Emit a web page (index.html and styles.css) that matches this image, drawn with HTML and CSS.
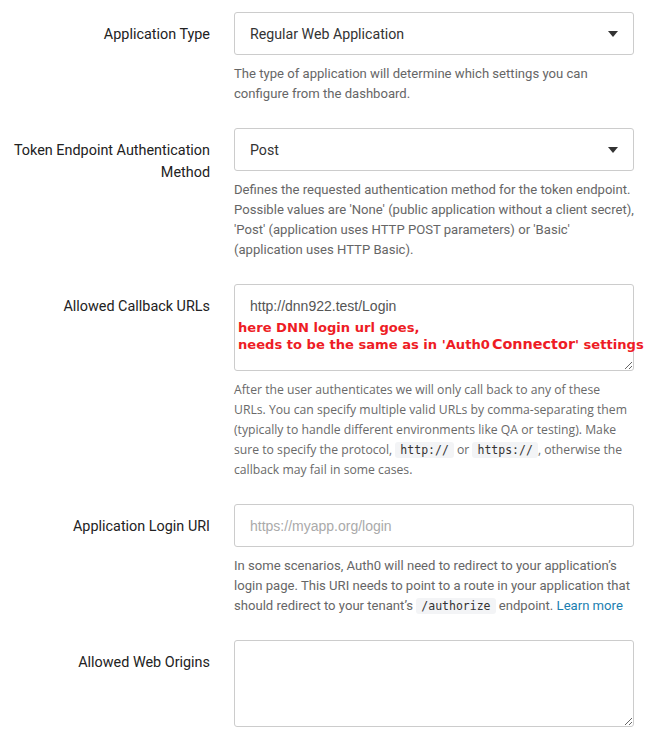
FILE: index.html
```html
<!DOCTYPE html>
<html>
<head>
<meta charset="utf-8">
<link rel="stylesheet" href="styles.css">
</head>
<body>
<div class="form">
  <div class="row">
    <div class="label">Application Type</div>
    <div class="control">
      <div class="select">
        <span>Regular Web Application</span>
        <svg class="caret" width="10" height="6" viewBox="0 0 10 6"><path d="M0 0h10L5 6z" fill="#333"/></svg>
      </div>
      <p class="help">The type of application will determine which settings you can configure from the dashboard.</p>
    </div>
  </div>

  <div class="row">
    <div class="label">Token Endpoint Authentication Method</div>
    <div class="control">
      <div class="select">
        <span>Post</span>
        <svg class="caret" width="10" height="6" viewBox="0 0 10 6"><path d="M0 0h10L5 6z" fill="#333"/></svg>
      </div>
      <p class="help">Defines the requested authentication method for the token endpoint. Possible values are 'None' (public application without a client secret), 'Post' (application uses HTTP POST parameters) or 'Basic' (application uses HTTP Basic).</p>
    </div>
  </div>

  <div class="row">
    <div class="label">Allowed Callback URLs</div>
    <div class="control">
      <div class="area-wrap">
        <textarea class="area">http://dnn922.test/Login</textarea>
        <div class="note">here DNN login url goes,<br>needs to be the same as in 'Auth0<span class="note-big">Connector</span>' settings</div>
      </div>
      <p class="help help-alt">After the user authenticates we will only call back to any of these URLs. You can specify multiple valid URLs by comma-separating them (typically to handle different environments like QA or testing). Make sure to specify the protocol, <code>http://</code> or <code>https://</code>, otherwise the callback may fail in some cases.</p>
    </div>
  </div>

  <div class="row">
    <div class="label">Application Login URI</div>
    <div class="control">
      <input class="input" type="text" placeholder="https://myapp.org/login">
      <p class="help">In some scenarios, Auth0 will need to redirect to your application’s login page. This URI needs to point to a route in your application that should redirect to your tenant’s <code>/authorize</code> endpoint. <a href="#">Learn more</a></p>
    </div>
  </div>

  <div class="row">
    <div class="label">Allowed Web Origins</div>
    <div class="control">
      <textarea class="area"></textarea>
    </div>
  </div>
</div>
</body>
</html>
```

FILE: styles.css
```css
html, body {
  margin: 0;
  padding: 0;
  background: #fff;
}
body {
  font-family: Roboto, "Liberation Sans", sans-serif;
  color: #333;
}
.form {
  padding-top: 12px;
  display: flex;
  flex-direction: column;
  gap: 24px;
}
.row {
  display: grid;
  grid-template-columns: 210px 400px;
  column-gap: 24px;
}
.label {
  text-align: right;
  font-size: 14.4px;
  line-height: 22px;
  padding-top: 12px;
  color: #222;
}
.control {
  display: flex;
  flex-direction: column;
}
.select {
  box-sizing: border-box;
  height: 43px;
  border: 1px solid #ccc;
  border-radius: 3px;
  display: flex;
  align-items: center;
  justify-content: space-between;
  padding: 0 15px 0 15px;
  font-size: 14.2px;
  color: #333;
}
.caret {
  display: block;
}
.help {
  margin: 9px 0 0;
  font-size: 13.1px;
  line-height: 20px;
  color: #666;
}
.help-alt {
  font-family: "Open Sans", Roboto, sans-serif;
  font-size: 12.2px;
  color: #6a6a6a;
}
.help a {
  color: #1a7eb0;
  text-decoration: none;
}
code {
  font-family: "DejaVu Sans Mono", monospace;
  font-size: 11.5px;
  background: #f3f4f6;
  border-radius: 3px;
  padding: 1px 5px;
  color: #333;
}
.area-wrap {
  position: relative;
}
.area {
  display: block;
  box-sizing: border-box;
  width: 400px;
  height: 87px;
  border: 1px solid #ccc;
  border-radius: 3px;
  margin: 0;
  padding: 12px 15px;
  font-family: "Liberation Sans", Arial, sans-serif;
  font-size: 14px;
  line-height: 18px;
  color: #555;
  resize: vertical;
  outline: none;
}
.input {
  display: block;
  box-sizing: border-box;
  width: 400px;
  height: 43px;
  border: 1px solid #ccc;
  border-radius: 3px;
  margin: 0;
  padding: 0 15px;
  font-family: "Liberation Sans", Arial, sans-serif;
  font-size: 14px;
  color: #555;
  outline: none;
}
.input::placeholder {
  color: #aaa;
}
.note {
  position: absolute;
  left: 4px;
  top: 35px;
  font-family: "DejaVu Sans", Verdana, sans-serif;
  font-weight: bold;
  font-size: 13.1px;
  line-height: 17px;
  color: #ee1c25;
  white-space: nowrap;
}
.note-big {
  font-size: 14.4px;
  margin-left: 2px;
}
```
